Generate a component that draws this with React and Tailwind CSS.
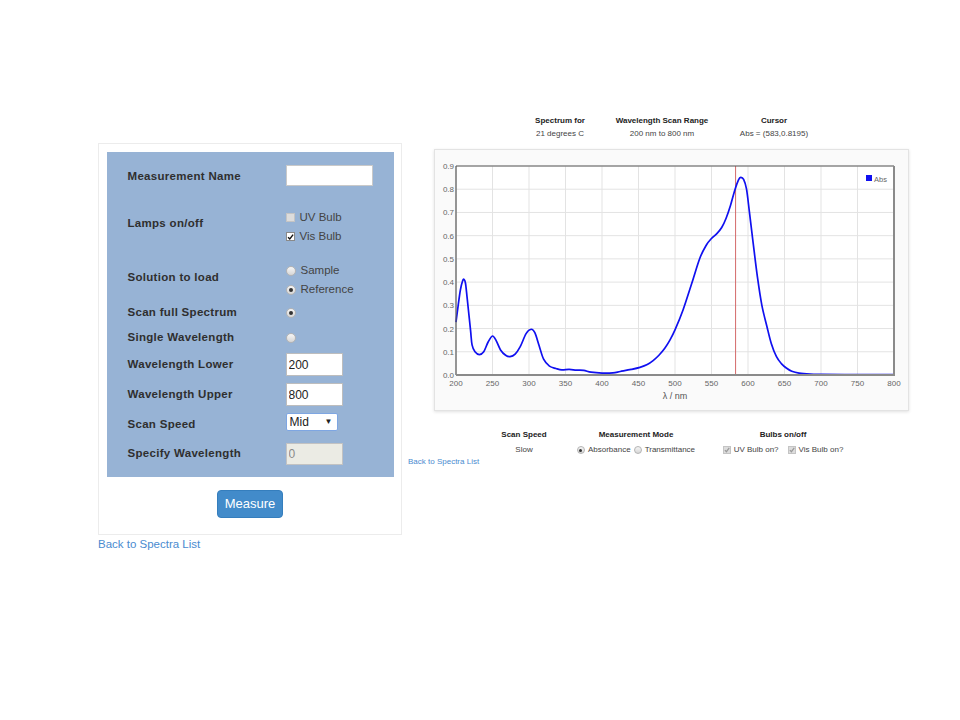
import React from "react";

// spectrum read off the reference plot: [nm, absorbance]
const spectrum = [
  [200, 0.228], [203, 0.3], [206, 0.366], [209, 0.405], [211, 0.412], [213, 0.395],
  [215, 0.34], [217, 0.28], [220, 0.19], [222, 0.13], [226, 0.1], [232, 0.088],
  [238, 0.1], [244, 0.142], [250, 0.168], [255, 0.148], [261, 0.108], [268, 0.085],
  [274, 0.079], [281, 0.09], [288, 0.122], [296, 0.178], [303, 0.197], [308, 0.182],
  [314, 0.125], [320, 0.068], [328, 0.038], [337, 0.028], [345, 0.022], [355, 0.024],
  [365, 0.021], [375, 0.02], [385, 0.012], [400, 0.008], [415, 0.009], [425, 0.015],
  [440, 0.024], [452, 0.033], [462, 0.045], [470, 0.062], [478, 0.085], [486, 0.115],
  [493, 0.15], [500, 0.194], [511, 0.28], [523, 0.395], [534, 0.503], [543, 0.56],
  [550, 0.588], [557, 0.608], [564, 0.635], [570, 0.675], [576, 0.73], [582, 0.797],
  [587, 0.84], [590, 0.851], [594, 0.842], [598, 0.8], [602, 0.7], [607, 0.57],
  [613, 0.42], [619, 0.3], [626, 0.208], [632, 0.135], [639, 0.079], [646, 0.048],
  [653, 0.029], [660, 0.016], [670, 0.008], [685, 0.004], [700, 0.003], [750, 0.002],
  [800, 0.002],
];

const X0 = 21;
const Y0 = 225;
const PW = 438;
const PH = 209;
const px = (nm) => X0 + ((nm - 200) / 600) * PW;
const py = (a) => Y0 - (a / 0.9) * PH;

function smoothPath(points) {
  const p = points.map(([x, y]) => [px(x), py(y)]);
  let d = `M${p[0][0].toFixed(2)},${p[0][1].toFixed(2)}`;
  for (let i = 0; i < p.length - 1; i++) {
    const a = p[i - 1] || p[i];
    const b = p[i];
    const c = p[i + 1];
    const e = p[i + 2] || c;
    const c1x = b[0] + (c[0] - a[0]) / 6;
    const c1y = b[1] + (c[1] - a[1]) / 6;
    const c2x = c[0] - (e[0] - b[0]) / 6;
    const c2y = c[1] - (e[1] - b[1]) / 6;
    d += ` C${c1x.toFixed(2)},${c1y.toFixed(2)} ${c2x.toFixed(2)},${c2y.toFixed(2)} ${c[0].toFixed(2)},${c[1].toFixed(2)}`;
  }
  return d;
}

const Radio = ({ checked, small }) => (
  <span
    className={`inline-flex items-center justify-center rounded-full border border-[#b4b4b4] bg-linear-to-b from-[#f6f6f6] to-[#d6d6d6] ${
      small ? "w-[8px] h-[8px]" : "w-[10px] h-[10px]"
    }`}>
    {checked && (
      <span
        className={`rounded-full bg-[#333] ${small ? "w-[3px] h-[3px]" : "w-[4px] h-[4px]"}`}
      />
    )}
  </span>
);

const Check = ({ checked, disabled, small }) => (
  <span
    className={`inline-flex items-center justify-center border ${
      small ? "w-[8px] h-[8px]" : "w-[9px] h-[9px]"
    } ${
      checked && !disabled
        ? "bg-white border-[#8a8a8a]"
        : "bg-[#dcdcdc] border-[#c4c4c4]"
    }`}>
    {checked && (
      <svg width="8" height="8" viewBox="0 0 8 8">
        <path
          d="M1.2 4.2 L3.2 6.3 L7 1.2"
          fill="none"
          stroke={disabled ? "#9a9a9a" : "#111"}
          strokeWidth="1.6"
        />
      </svg>
    )}
  </span>
);

const Label = ({ children, className = "" }) => (
  <div className={`w-[158px] shrink-0 text-[11.5px] font-bold text-[#2f2f2f] tracking-[0.3px] ${className}`}>
    {children}
  </div>
);

const Option = ({ children }) => (
  <div className="flex items-center gap-[5px] h-[19px] text-[11.5px] text-[#444]">{children}</div>
);

const SpectrumChart = () => {
  const xs = [200, 250, 300, 350, 400, 450, 500, 550, 600, 650, 700, 750, 800];
  const ys = [0, 0.1, 0.2, 0.3, 0.4, 0.5, 0.6, 0.7, 0.8, 0.9];
  return (
    <svg width="473" height="260" className="block" style={{ fontFamily: "'Liberation Sans', Arial, sans-serif" }}>
      <rect x={X0} y={Y0 - PH} width={PW} height={PH} fill="#fff" />
      {xs.map((v) => (
        <line key={"gx" + v} x1={px(v)} x2={px(v)} y1={Y0 - PH} y2={Y0} stroke="#e3e3e3" strokeWidth="1" />
      ))}
      {ys.map((v) => (
        <line key={"gy" + v} x1={X0} x2={X0 + PW} y1={py(v)} y2={py(v)} stroke="#e3e3e3" strokeWidth="1" />
      ))}
      <line x1={px(583)} x2={px(583)} y1={Y0 - PH} y2={Y0} stroke="#d46a6a" strokeWidth="1" />
      <path d={smoothPath(spectrum)} fill="none" stroke="#1010f0" strokeWidth="1.7" />
      <line x1={X0} x2={X0 + PW} y1={Y0 - PH} y2={Y0 - PH} stroke="#5a5a5a" strokeWidth="1.2" />
      <line x1={X0} x2={X0} y1={Y0 - PH} y2={Y0} stroke="#5a5a5a" strokeWidth="1.2" />
      <line x1={X0 + PW} x2={X0 + PW} y1={Y0 - PH} y2={Y0 + 1} stroke="#8a8a8a" strokeWidth="2" />
      <line x1={X0} x2={X0 + PW + 1} y1={Y0} y2={Y0} stroke="#8a8a8a" strokeWidth="2" />
      {ys.map((v) => (
        <text key={"ly" + v} x={X0 - 2} y={py(v) + 3} fontSize="8" fill="#666" textAnchor="end">
          {v.toFixed(1)}
        </text>
      ))}
      {xs.map((v) => (
        <text key={"lx" + v} x={px(v)} y={Y0 + 11} fontSize="8" fill="#666" textAnchor="middle">
          {v}
        </text>
      ))}
      <text x="240" y="249" fontSize="9" fill="#555" textAnchor="middle">
        λ / nm
      </text>
      <rect x="431" y="25" width="6" height="6" fill="#1010f0" />
      <text x="439" y="31.5" fontSize="7.5" fill="#666">
        Abs
      </text>
    </svg>
  );
};

const App = () => {
  return (
    <div
      className="w-[960px] h-[720px] bg-white flex items-start text-[#333]"
      style={{ fontFamily: "'Liberation Sans', Arial, sans-serif" }}>
      {/* left: measurement form */}
      <div className="ml-[98px] mt-[143px] w-[304px] shrink-0">
        <div className="border border-[#ececec] bg-white p-[8px] pb-[16px] flex flex-col items-center">
          <div className="w-[287px] bg-[#97b3d5] pl-[21px] pt-[10px] pb-[12px]">
            <div className="flex items-center h-[30px]">
              <Label>Measurement Name</Label>
              <input
                readOnly
                className="w-[87px] h-[21px] -mt-[3px] bg-white border border-[#c9c9c9] outline-none px-1 text-[12px]"
              />
            </div>

            <div className="flex items-center h-[38px] mt-[16px]">
              <Label className="pb-[6px]">Lamps on/off</Label>
              <div>
                <Option>
                  <Check />
                  UV Bulb
                </Option>
                <Option>
                  <Check checked />
                  Vis Bulb
                </Option>
              </div>
            </div>

            <div className="flex items-center h-[38px] mt-[15px]">
              <Label className="pb-[4px]">Solution to load</Label>
              <div>
                <Option>
                  <Radio />
                  Sample
                </Option>
                <Option>
                  <Radio checked />
                  Reference
                </Option>
              </div>
            </div>

            <div className="flex items-center h-[24px] mt-[2px]">
              <Label>Scan full Spectrum</Label>
              <Radio checked />
            </div>

            <div className="flex items-center h-[24px] mt-[1px]">
              <Label>Single Wavelength</Label>
              <Radio />
            </div>

            <div className="flex items-center h-[25px] mt-[2px]">
              <Label>Wavelength Lower</Label>
              <input
                readOnly
                value="200"
                className="w-[57px] h-[23px] bg-white border border-[#bdbdbd] outline-none px-[2px] text-[12px] text-[#222]"
              />
            </div>

            <div className="flex items-center h-[25px] mt-[5px]">
              <Label>Wavelength Upper</Label>
              <input
                readOnly
                value="800"
                className="w-[57px] h-[23px] bg-white border border-[#bdbdbd] outline-none px-[2px] text-[12px] text-[#222]"
              />
            </div>

            <div className="flex items-center h-[19px] mt-[5px]">
              <Label className="pt-[6px]">Scan Speed</Label>
              <div className="w-[52px] h-[18px] bg-white border border-[#7ea6e2] rounded-[2px] flex items-center justify-between pl-[3px] pr-[4px] text-[12px] text-[#222]">
                <span>Mid</span>
                <span className="text-[8px]">▼</span>
              </div>
            </div>

            <div className="flex items-center h-[23px] mt-[11px]">
              <Label>Specify Wavelength</Label>
              <input
                readOnly
                disabled
                value="0"
                className="w-[57px] h-[22px] bg-[#ebebe4] border border-[#c2c2c2] outline-none px-[2px] text-[12px] text-[#8a8a8a]"
              />
            </div>
          </div>

          <button className="mt-[13px] w-[66px] h-[28px] rounded-[4px] bg-[#428bca] border border-[#357ebd] text-white text-[13px]">
            Measure
          </button>
        </div>
        <div className="mt-[2px] text-[11.5px] leading-[14px] text-[#4a8bd0]">Back to Spectra List</div>
      </div>

      {/* right: spectrum display */}
      <div className="ml-[6px] mt-[114px] w-[500px]">
        <div className="flex text-[8px] leading-[13px] text-center">
          <div className="ml-[112px] w-[80px]">
            <div className="font-bold text-[#222]">Spectrum for</div>
            <div className="text-[#444]">21 degrees C</div>
          </div>
          <div className="w-[124px]">
            <div className="font-bold text-[#222]">Wavelength Scan Range</div>
            <div className="text-[#444]">200 nm to 800 nm</div>
          </div>
          <div className="w-[100px]">
            <div className="font-bold text-[#222]">Cursor</div>
            <div className="text-[#444]">Abs = (583,0.8195)</div>
          </div>
        </div>

        <div className="ml-[26px] mt-[9px] w-[475px] h-[262px] border border-[#e3e3e3] bg-[#fafafa] shadow-[0_1px_3px_rgba(0,0,0,0.12)]">
          <SpectrumChart />
        </div>

        <div className="flex mt-[18px] text-[8px] text-center">
          <div className="ml-[76px] w-[80px]">
            <div className="font-bold leading-[12px] text-[#222]">Scan Speed</div>
            <div className="mt-[3px] leading-[12px] text-[#444]">Slow</div>
          </div>
          <div className="w-[144px]">
            <div className="font-bold leading-[12px] text-[#222]">Measurement Mode</div>
            <div className="mt-[3px] h-[12px] flex items-center justify-center gap-[3px] text-[#444]">
              <Radio checked small />
              <span>Absorbance</span>
              <Radio small />
              <span>Transmittance</span>
            </div>
          </div>
          <div className="w-[150px]">
            <div className="font-bold leading-[12px] text-[#222]">Bulbs on/off</div>
            <div className="mt-[3px] h-[12px] flex items-center justify-center gap-[3px] text-[#444]">
              <Check checked disabled small />
              <span className="mr-[6px]">UV Bulb on?</span>
              <Check checked disabled small />
              <span>Vis Bulb on?</span>
            </div>
          </div>
        </div>
        <div className="mt-[1px] text-[8px] leading-[10px] text-[#4a8bd0]">Back to Spectra List</div>
      </div>
    </div>
  );
};

export default App;
